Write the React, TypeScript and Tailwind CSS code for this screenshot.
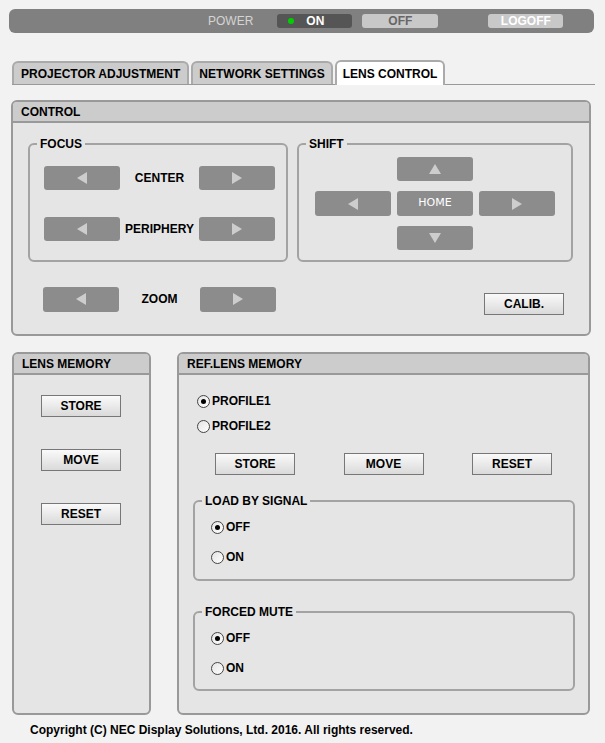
import type { ReactNode } from "react";

const font = { fontFamily: '"Liberation Sans", Arial, sans-serif' };

function Tri({ dir }: { dir: "left" | "right" | "up" | "down" }) {
  const pts = {
    left: "10,0 10,12 0,6",
    right: "0,0 0,12 10,6",
    up: "0,10 12,10 6,0",
    down: "0,0 12,0 6,10",
  }[dir];
  const horiz = dir === "left" || dir === "right";
  return (
    <svg width={horiz ? 10 : 12} height={horiz ? 12 : 10} viewBox={horiz ? "0 0 10 12" : "0 0 12 10"}>
      <polygon points={pts} fill="#cdcdcd" />
    </svg>
  );
}

function DarkBtn({ children, h = "h-[24px]" }: { children: ReactNode; h?: string }) {
  return (
    <div className={`w-[76px] ${h} rounded-[3px] bg-[#8c8c8c] flex items-center justify-center`}>
      {children}
    </div>
  );
}

function LightBtn({ label, w = "w-[80px]" }: { label: string; w?: string }) {
  return (
    <div
      className={`${w} h-[22px] border border-[#777] bg-gradient-to-b from-[#fafafa] to-[#dadada] flex items-center justify-center text-[12px] font-bold text-black`}
    >
      {label}
    </div>
  );
}

function Panel({ title, className, children }: { title: string; className?: string; children: ReactNode }) {
  return (
    <div className={`border-2 border-[#999] rounded-[6px] bg-[#e5e5e5] overflow-hidden ${className ?? ""}`}>
      <div className="h-[21px] bg-[#cccccc] border-b-2 border-[#999] flex items-center pl-[8px] text-[12px] font-bold text-black">
        {title}
      </div>
      {children}
    </div>
  );
}

function Group({ title, className, children }: { title: string; className?: string; children: ReactNode }) {
  return (
    <fieldset className={`border-2 border-[#a3a3a3] rounded-[6px] ${className ?? ""}`}>
      <legend className="ml-[7px] px-[3px] text-[12px] font-bold text-black leading-[14px]">{title}</legend>
      {children}
    </fieldset>
  );
}

function Radio({ label, checked }: { label: string; checked?: boolean }) {
  return (
    <div className="flex items-center gap-[2px] text-[12px] font-bold text-black">
      <span className="w-[13px] h-[13px] rounded-full border border-[#444] bg-gradient-to-br from-[#e4e4e4] to-white flex items-center justify-center">
        {checked && <span className="w-[5px] h-[5px] rounded-full bg-black" />}
      </span>
      <span>{label}</span>
    </div>
  );
}

export default function App() {
  return (
    <div className="w-[605px] h-[743px] bg-[#f2f2f2] overflow-hidden" style={font}>
      {/* power bar */}
      <div className="mx-[9px] mt-[9px] w-[585px] h-[24px] rounded-[6px] bg-[#808080] flex items-center">
        <span className="ml-[199px] text-[12px] text-[#d4d4d4]">POWER</span>
        <div className="ml-[24px] w-[75px] h-[14px] rounded-[3px] bg-[#555] flex items-center text-[12px] font-bold text-white">
          <span className="ml-[11px] w-[6px] h-[6px] rounded-full bg-[#00d000]" />
          <span className="ml-[12px]">ON</span>
        </div>
        <div className="ml-[10px] w-[76px] h-[14px] rounded-[3px] bg-[#c8c8c8] flex items-center justify-center text-[12px] font-bold text-[#666]">
          OFF
        </div>
        <div className="ml-[50px] w-[75px] h-[14px] rounded-[3px] bg-[#c8c8c8] flex items-center justify-center text-[12px] font-bold text-white">
          LOGOFF
        </div>
      </div>

      {/* tabs */}
      <div className="mt-[27px] ml-[12px] w-[583px] flex items-end border-b border-[#999] h-[25px]">
        <div className="h-[23px] px-[7px] mr-[2px] rounded-t-[6px] border-2 border-b-0 border-[#aaa] bg-[#cccccc] flex items-center text-[12px] font-bold text-black">
          PROJECTOR ADJUSTMENT
        </div>
        <div className="h-[23px] px-[6px] mr-[2px] rounded-t-[6px] border-2 border-b-0 border-[#aaa] bg-[#cccccc] flex items-center text-[12px] font-bold text-black">
          NETWORK SETTINGS
        </div>
        <div className="h-[25px] px-[6px] -mb-px rounded-t-[6px] border-2 border-b-0 border-[#aaa] bg-white flex items-center text-[12px] font-bold text-black">
          LENS CONTROL
        </div>
      </div>

      <div className="px-[11px] mt-[15px]">
        <Panel title="CONTROL" className="w-[580px]">
          <div className="flex gap-[9px] pl-[15px] mt-[14px]">
            <Group title="FOCUS" className="w-[260px] pt-[15px] pb-[18px]">
              <div className="flex flex-col gap-[27px] pl-[14px]">
                {["CENTER", "PERIPHERY"].map((l) => (
                  <div key={l} className="flex items-center">
                    <DarkBtn>
                      <Tri dir="left" />
                    </DarkBtn>
                    <span className="w-[79px] text-center text-[12px] font-bold text-black">{l}</span>
                    <DarkBtn>
                      <Tri dir="right" />
                    </DarkBtn>
                  </div>
                ))}
              </div>
            </Group>
            <Group title="SHIFT" className="w-[276px] pt-[6px] pb-[10px]">
              <div className="grid grid-cols-[76px_76px_76px] gap-x-[6px] gap-y-[10px] justify-center">
                <div />
                <DarkBtn>
                  <Tri dir="up" />
                </DarkBtn>
                <div />
                <DarkBtn h="h-[25px]">
                  <Tri dir="left" />
                </DarkBtn>
                <DarkBtn h="h-[25px]">
                  <span className="text-[11px] text-white" style={{ fontFamily: '"DejaVu Sans", Verdana, sans-serif' }}>
                    HOME
                  </span>
                </DarkBtn>
                <DarkBtn h="h-[25px]">
                  <Tri dir="right" />
                </DarkBtn>
                <div />
                <DarkBtn>
                  <Tri dir="down" />
                </DarkBtn>
                <div />
              </div>
            </Group>
          </div>
          <div className="flex items-center mt-[21px] mb-[19px] pl-[30px] pr-[25px]">
            <DarkBtn h="h-[25px]">
              <Tri dir="left" />
            </DarkBtn>
            <span className="w-[81px] text-center text-[12px] font-bold text-black">ZOOM</span>
            <DarkBtn h="h-[25px]">
              <Tri dir="right" />
            </DarkBtn>
            <div className="ml-auto mt-[10px]">
              <LightBtn label="CALIB." />
            </div>
          </div>
        </Panel>
      </div>

      <div className="flex gap-[26px] px-[12px] mt-[16px]">
        <Panel title="LENS MEMORY" className="w-[139px] h-[363px]">
          <div className="flex flex-col items-center gap-[32px] pt-[20px] pr-[1px]">
            <LightBtn label="STORE" />
            <LightBtn label="MOVE" />
            <LightBtn label="RESET" />
          </div>
        </Panel>
        <Panel title="REF.LENS MEMORY" className="w-[413px] h-[363px]">
          <div className="pl-[18px] pt-[17px] flex flex-col gap-[7px]">
            <Radio label="PROFILE1" checked />
            <Radio label="PROFILE2" />
          </div>
          <div className="flex justify-between px-[36px] mt-[18px]">
            <LightBtn label="STORE" />
            <LightBtn label="MOVE" />
            <LightBtn label="RESET" />
          </div>
          <div className="pl-[14px] mt-[19px] flex flex-col gap-[24px]">
            <Group title="LOAD BY SIGNAL" className="w-[382px] h-[87px] pt-[10px]">
              <div className="flex flex-col gap-[12px] pl-[16px]">
                <Radio label="OFF" checked />
                <Radio label="ON" />
              </div>
            </Group>
            <Group title="FORCED MUTE" className="w-[382px] h-[86px] pt-[10px]">
              <div className="flex flex-col gap-[12px] pl-[16px]">
                <Radio label="OFF" checked />
                <Radio label="ON" />
              </div>
            </Group>
          </div>
        </Panel>
      </div>

      <div className="mt-[6px] ml-[30px] text-[12px] font-bold text-black">
        Copyright (C) NEC Display Solutions, Ltd. 2016. All rights reserved.
      </div>
    </div>
  );
}
